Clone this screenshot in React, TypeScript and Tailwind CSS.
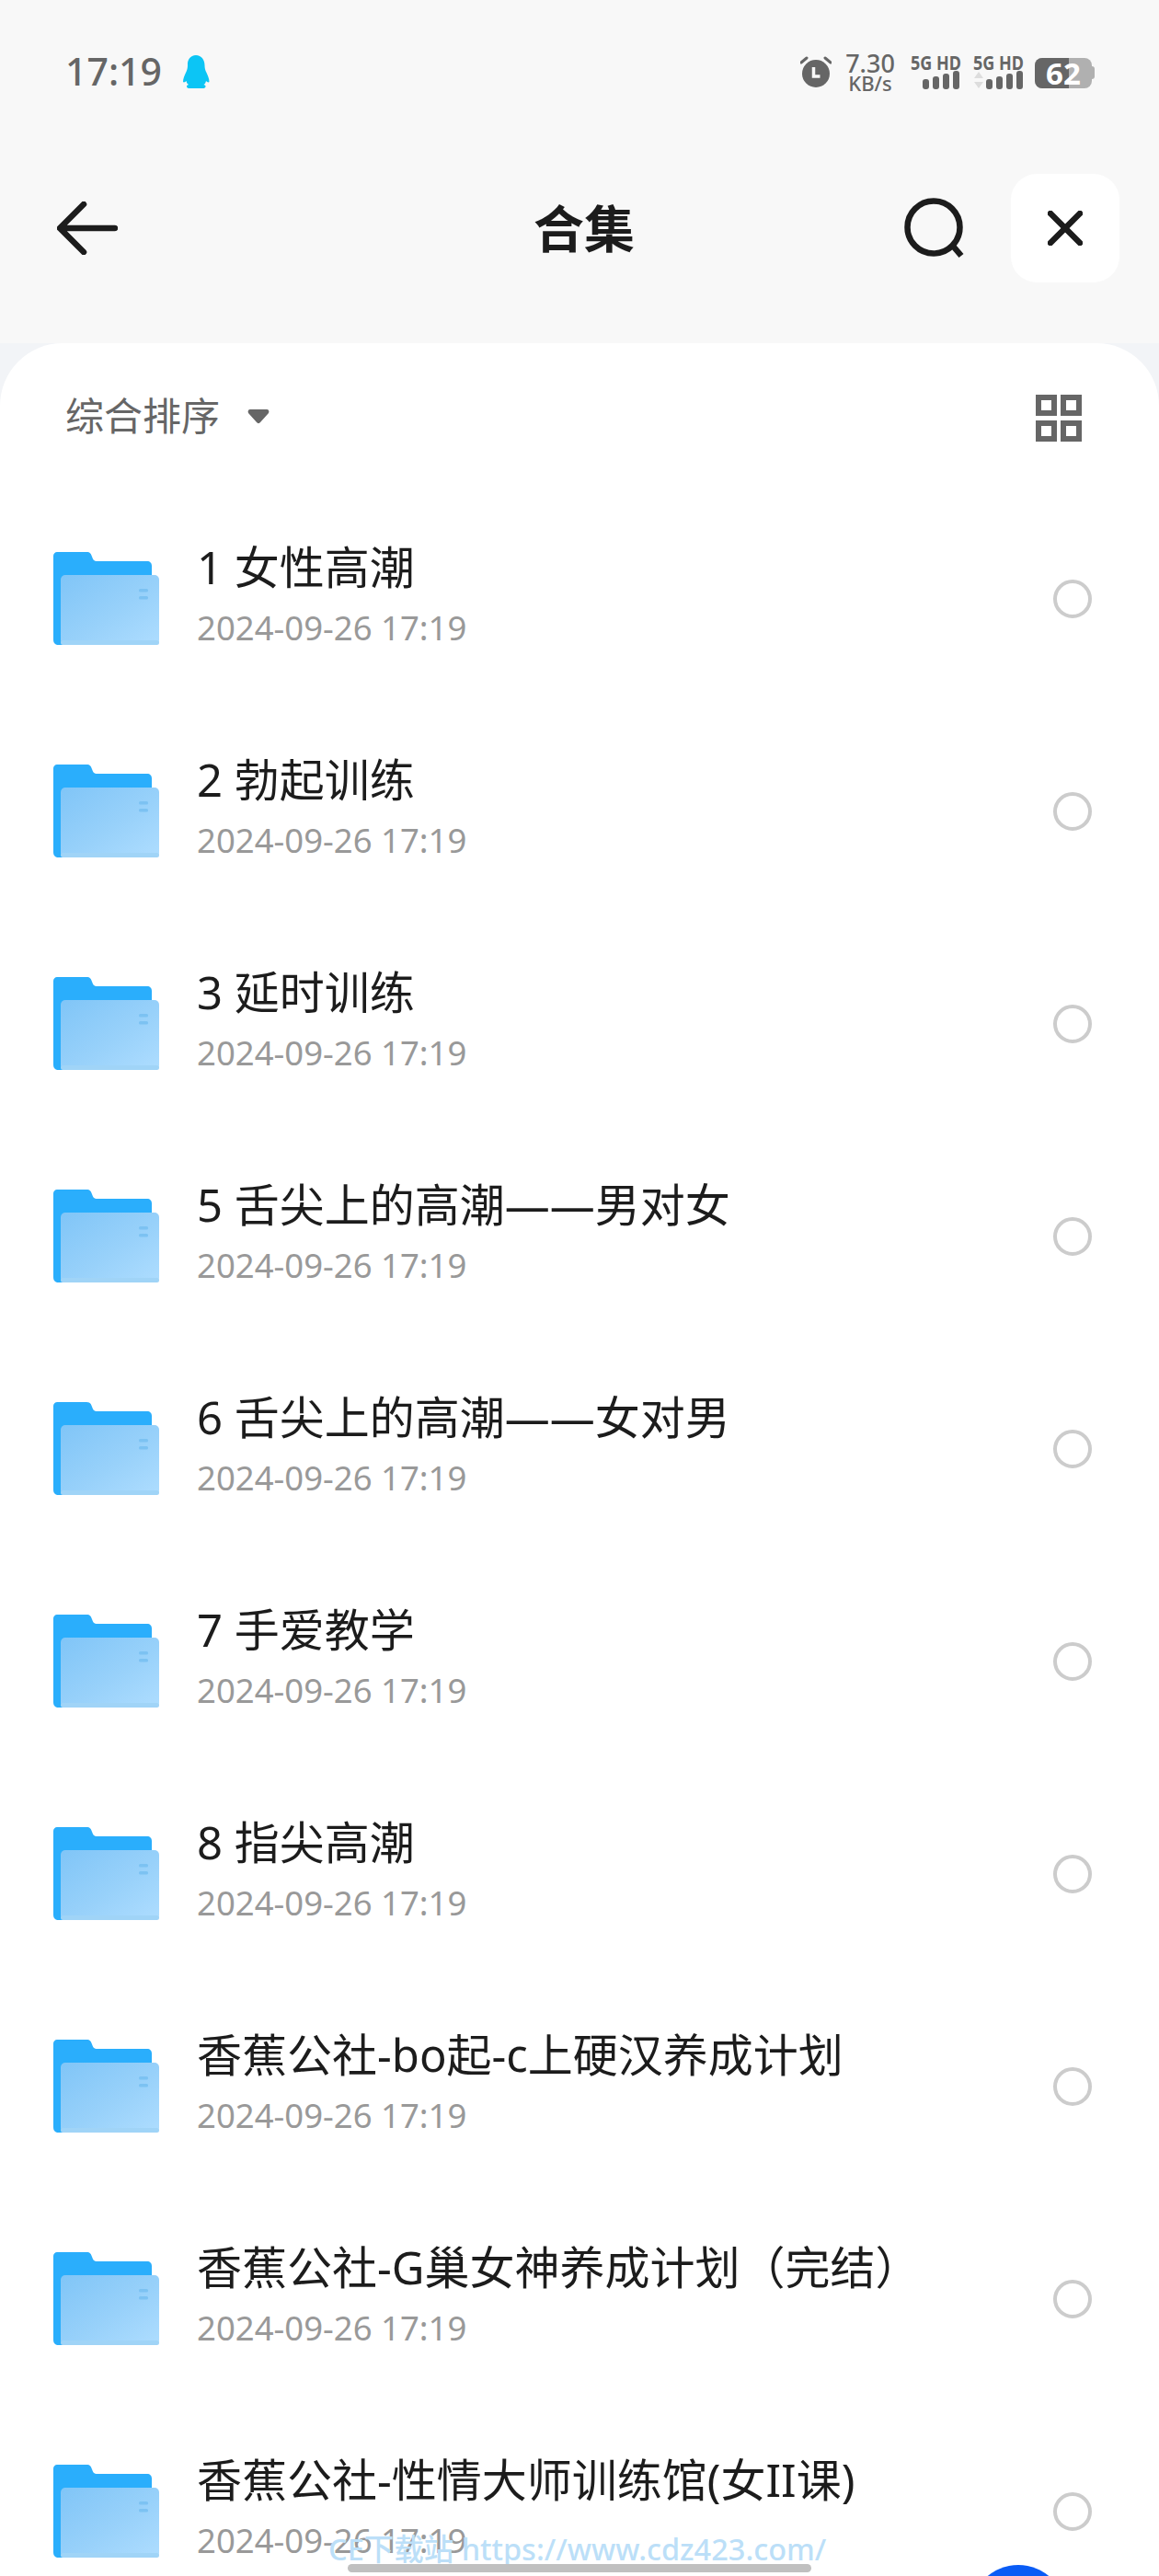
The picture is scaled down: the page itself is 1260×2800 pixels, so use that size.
const rows = [
  "1 女性高潮",
  "2 勃起训练",
  "3 延时训练",
  "5 舌尖上的高潮——男对女",
  "6 舌尖上的高潮——女对男",
  "7 手爱教学",
  "8 指尖高潮",
  "香蕉公社-bo起-c上硬汉养成计划",
  "香蕉公社-G巢女神养成计划（完结）",
  "香蕉公社-性情大师训练馆(女II课)",
];

function Folder() {
  return (
    <svg width="115" height="101" viewBox="0 0 115 101" className="shrink-0">
      <defs>
        <linearGradient id="ff" x1="0" y1="0" x2="1" y2="1">
          <stop offset="0" stopColor="#80c5f7" />
          <stop offset="0.55" stopColor="#98d1fa" />
          <stop offset="1" stopColor="#aeddff" />
        </linearGradient>
      </defs>
      <path d="M4 0H36c4 0 5 2 6 5c1 3 2 5 6 5H102c3 0 5 2 5 5V40H40V101H6c-4 0-6-2-6-6V4C0 2 2 0 4 0Z" fill="#2aaefc" />
      <rect x="8" y="25" width="107" height="76" rx="5" fill="url(#ff)" />
      <rect x="8" y="96" width="107" height="5" rx="2.5" fill="#a0d4f7" />
      <rect x="93" y="40" width="10" height="3.5" rx="1.5" fill="#7cc2f2" />
      <rect x="93" y="48" width="10" height="3.5" rx="1.5" fill="#7cc2f2" />
    </svg>
  );
}

function Bars() {
  return (
    <svg width="40" height="20" viewBox="0 0 40 20">
      <rect x="0" y="9" width="7" height="11" rx="3" fill="#666" />
      <rect x="11" y="6" width="7" height="14" rx="3" fill="#666" />
      <rect x="22" y="3" width="7" height="17" rx="3" fill="#666" />
      <rect x="33" y="0" width="7" height="20" rx="3" fill="#666" />
    </svg>
  );
}

export default function App() {
  return (
    <div
      className="relative flex h-[2800px] w-[1260px] flex-col overflow-hidden bg-[#f2f4f7] text-[#1c1c1c]"
      style={{ fontFamily: '"Noto Sans", "Noto Sans CJK SC", sans-serif' }}
    >
      <div className="h-[373px] shrink-0 bg-[#f8f8f8]">
        <div className="flex h-[189px] items-start justify-between pl-[71px] pr-[70px] pt-[56px]">
          <div className="flex items-center gap-[22px]">
            <span className="text-[41px] font-medium leading-[43px] text-[#666]">17:19</span>
            <svg width="30" height="36" viewBox="0 0 30 36">
              <path
                d="M15 0c6 0 9.500 5 9.500 11c0 3 .5 5 2 8c1.500 3 3 7 3 10c-1 1-2.500 0-3.500-1c-.5 2-1 3-2.500 4c1.500.5 2 1 2 2c0 1.500-1.500 2-3 2H8c-1.500 0-3-.5-3-2c0-1 .5-1.500 2-2c-1.500-1-2-2-2.500-4c-1 1-2.500 2-3.500 1c0-3 1.500-7 3-10c1.500-3 2-5 2-8C5.500 5 9 0 15 0Z"
                fill="#0cc5f5"
              />
            </svg>
          </div>
          <div className="flex items-start">
            <svg width="34" height="34" viewBox="0 0 34 34" className="mr-[17px] mt-[5px]">
              <circle cx="17" cy="19" r="15" fill="#666" />
              <path d="M1 7L7 2M33 7L27 2" stroke="#666" strokeWidth="3" strokeLinecap="round" />
              <path d="M14.500 12V22H21.500" stroke="#f8f8f8" strokeWidth="3.500" fill="none" />
            </svg>
            <div className="mr-[18px] mt-[1px] flex w-[50px] flex-col items-center whitespace-nowrap font-medium text-[#666]">
              <span className="text-[27px] leading-[24px]">7.30</span>
              <span className="text-[22px] leading-[19px]">KB/s</span>
            </div>
            <div className="mr-[11px] flex w-[56px] flex-col items-end">
              <span className="origin-top scale-y-[1.15] whitespace-nowrap text-[18px] font-bold leading-[20px] text-[#666]">5G HD</span>
              <div className="mr-[2px] mt-[1px]"><Bars /></div>
            </div>
            <div className="mr-[12px] flex w-[57px] flex-col items-end">
              <span className="origin-top scale-y-[1.15] whitespace-nowrap text-[18px] font-bold leading-[20px] text-[#666]">5G HD</span>
              <div className="mr-[1px] mt-[1px] flex items-center gap-[3px]">
                <svg width="10" height="20" viewBox="0 0 10 20">
                  <path d="M5 1L10 8H0ZM5 19L0 12H10Z" fill="#ddd" />
                </svg>
                <Bars />
              </div>
            </div>
            <div className="relative mt-[7px] flex h-[33px] w-[62px] items-center justify-center rounded-[8px] bg-[#b0b0b0]">
              <div className="absolute inset-y-0 left-0 w-[37px] rounded-l-[8px] bg-[#666]" />
              <span className="relative text-[33px] font-bold leading-[33px] text-white">62</span>
            </div>
            <div className="mt-[16px] h-[14px] w-[3px] rounded-r-[3px] bg-[#b0b0b0]" />
          </div>
        </div>
        <div className="relative flex h-[118px] items-center justify-between pl-[62px] pr-[43px]">
          <svg width="66" height="58" viewBox="0 0 66 58">
            <path d="M63 29H5M29 3L3 29L29 55" fill="none" stroke="#1c1c1c" strokeWidth="6.500" strokeLinecap="round" strokeLinejoin="round" />
          </svg>
          <span className="absolute left-0 right-0 text-center text-[55px] font-bold leading-[64px]">
            <span className="relative left-[5px]">合集</span>
          </span>
          <div className="relative flex items-center gap-[50px]">
            <svg width="66" height="66" viewBox="0 0 66 66">
              <circle cx="32" cy="32" r="28.500" fill="none" stroke="#1c1c1c" strokeWidth="6.500" />
              <path d="M51 50L62 63" stroke="#1c1c1c" strokeWidth="6.500" />
            </svg>
            <div className="flex h-[118px] w-[118px] items-center justify-center rounded-[28px] bg-white">
              <svg width="38" height="38" viewBox="0 0 38 38">
                <path d="M3 3L35 35M35 3L3 35" stroke="#1c1c1c" strokeWidth="6.500" strokeLinecap="round" />
              </svg>
            </div>
          </div>
        </div>
      </div>

      <div className="flex-1 rounded-t-[68px] bg-white">
        <div className="flex h-[162px] items-start justify-between pl-[71px] pr-[84px] pt-[53px]">
          <div className="flex items-center">
            <span className="text-[42px] leading-[52px] text-[#666]">综合排序</span>
            <svg width="24" height="17" viewBox="0 0 24 17" className="ml-[30px]">
              <path d="M3 1H21C23 1 24 3 23 5L14 15C13 16.500 11 16.500 10 15L1 5C0 3 1 1 3 1Z" fill="#666" />
            </svg>
          </div>
          <svg width="50" height="51" viewBox="0 0 50 51" className="mt-[3px]">
            <g fill="none" stroke="#666" strokeWidth="6">
              <rect x="3" y="3" width="17" height="17" />
              <rect x="30" y="3" width="17" height="17" />
              <rect x="3" y="31" width="17" height="17" />
              <rect x="30" y="31" width="17" height="17" />
            </g>
          </svg>
        </div>
        {rows.map((name) => (
          <div key={name} className="flex h-[231px] items-center pl-[58px] pr-[73px]">
            <Folder />
            <div className="ml-[41px] flex-1 pb-[13px]">
              <div className="text-[49px] leading-[66px] text-[#1c1c1c]">{name}</div>
              <div className="mt-[9px] text-[36.500px] leading-[48px] text-[#999]">2024-09-26 17:19</div>
            </div>
            <div className="h-[42px] w-[42px] rounded-full border-[4px] border-[#cccccc]" />
          </div>
        ))}
      </div>

      <div className="absolute left-[357px] top-[2751px] whitespace-nowrap text-[32.500px] font-medium leading-[40px] text-[#bcdff8]">
        CE下载站 https://www.cdz423.com/
      </div>
      <div className="absolute left-[378px] top-[2787px] h-[9px] w-[504px] rounded-full bg-[#c0c0c0]" />
      <div className="absolute left-[1055px] top-[2788px] h-[104px] w-[104px] rounded-full bg-[#0a5cf5]" />
    </div>
  );
}
